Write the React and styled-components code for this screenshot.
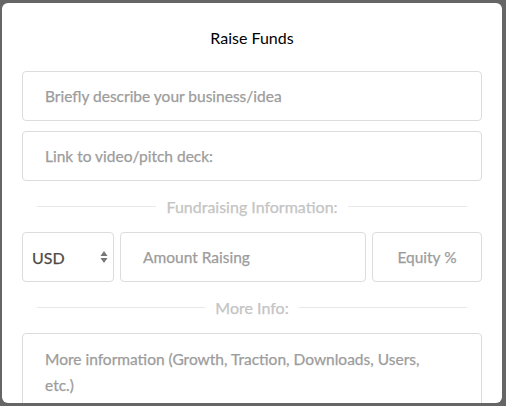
import React from "react"
import styled, { createGlobalStyle } from 'styled-components'

const GlobalStyle = createGlobalStyle`
	html, body {
		margin: 0;
		padding: 0;
		background: #666666;
		font-family: Lato, "Open Sans", sans-serif;
	}
	* { box-sizing: border-box; }
`

const Backdrop = styled.div`
	width: 506px;
	height: 406px;
	overflow: hidden;
	padding: 3px 4px 0 2px;
`

const Modal = styled.div`
	width: 500px;
	height: 400px;
	background: #fff;
	border-radius: 6px;
	overflow: hidden;
	padding: 25px 20px 0;
`

const Title = styled.h3`
	margin: 0;
	height: 20px;
	line-height: 20px;
	font-size: 16px;
	font-weight: 400;
	color: #000;
	text-align: center;
`

const Form = styled.div`
	margin-top: 23px;
	display: flex;
	flex-direction: column;
	gap: 10px;
`

const Field = styled.div`
	height: ${p => p.$tall ? '120px' : '50px'};
	border: 1px solid #dcdcdc;
	border-radius: 4px;
	padding: ${p => p.$tall ? '12px 40px 12px 22px' : '0 22px'};
	display: flex;
	align-items: ${p => p.$tall ? 'flex-start' : 'center'};
	justify-content: ${p => p.$center ? 'center' : 'flex-start'};
	flex: ${p => p.$grow ? 1 : 'none'};
	width: ${p => p.$width || 'auto'};
	font-size: 15.5px;
	font-weight: 400;
	line-height: 26px;
	color: #9c9c9c;
	-webkit-text-stroke: 0.25px #9c9c9c;
`

const Divider = styled.div`
	display: flex;
	align-items: center;
	gap: 10px;
	padding: 0 15px;
	height: 31px;
	color: #c4c4c4;
	font-size: 16px;
	font-weight: 400;
	-webkit-text-stroke: 0.25px #c4c4c4;
	&::before, &::after {
		content: "";
		flex: 1;
		height: 1px;
		background: #e8e8e8;
	}
`

const Row = styled.div`
	display: flex;
	gap: 6px;
`

const Select = styled.div`
	width: 92px;
	height: 50px;
	border: 1px solid #dcdcdc;
	border-radius: 4px;
	padding: 0 5px 0 9px;
	display: flex;
	align-items: center;
	justify-content: space-between;
	font-size: 16px;
	font-weight: 400;
	color: #4f4a45;
	-webkit-text-stroke: 0.25px #4f4a45;
`

const Arrows = () => (
	<svg width="8" height="14" viewBox="0 0 8 14">
		<path d="M4 1 L7.5 6 L0.5 6 Z" fill="#777" />
		<path d="M4 13 L7.5 8 L0.5 8 Z" fill="#777" />
	</svg>
)

const App = () => {
	return (
		<>
			<GlobalStyle />
			<Backdrop>
				<Modal>
					<Title>Raise Funds</Title>
					<Form>
						<Field>Briefly describe your business/idea</Field>
						<Field>Link to video/pitch deck:</Field>
						<Divider>Fundraising Information:</Divider>
						<Row>
							<Select>USD <Arrows /></Select>
							<Field $grow>Amount Raising</Field>
							<Field $width="110px" $center>Equity %</Field>
						</Row>
						<Divider>More Info:</Divider>
						<Field $tall>More information (Growth, Traction, Downloads, Users, etc.)</Field>
					</Form>
				</Modal>
			</Backdrop>
		</>
	)
}

export default App
